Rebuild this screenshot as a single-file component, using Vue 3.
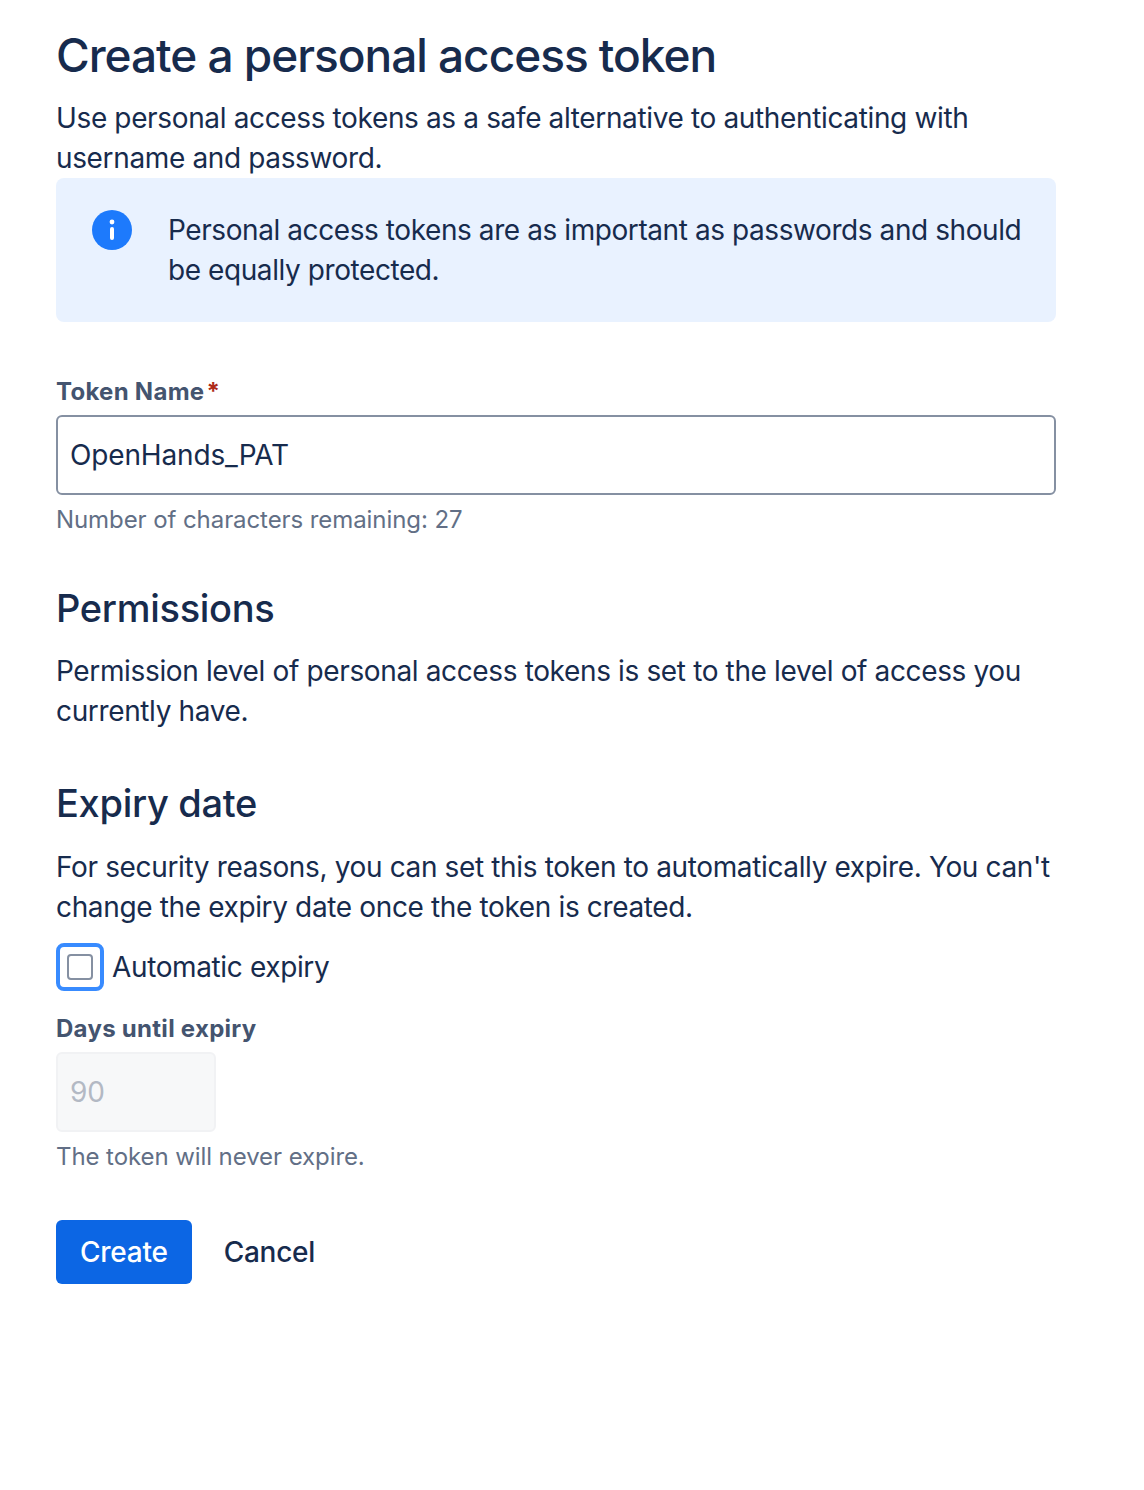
<template>
  <main class="page">
    <h1 class="title">Create a personal access token</h1>
    <p class="text">Use personal access tokens as a safe alternative to authenticating with username and password.</p>

    <div class="notice">
      <svg class="notice-icon" viewBox="0 0 40 40" aria-hidden="true">
        <circle cx="20" cy="20" r="20" fill="#1d7afc" />
        <circle cx="20" cy="12" r="2.4" fill="#fff" />
        <rect x="18" y="17" width="4" height="13" rx="2" fill="#fff" />
      </svg>
      <p class="text notice-text">Personal access tokens are as important as passwords and should be equally protected.</p>
    </div>

    <label class="label name-label">Token Name<span class="required">*</span></label>
    <input class="field" type="text" v-model="tokenName" />
    <div class="hint">Number of characters remaining: {{ 40 - tokenName.length }}</div>

    <h2 class="heading permissions">Permissions</h2>
    <p class="text">Permission level of personal access tokens is set to the level of access you currently have.</p>

    <h2 class="heading expiry">Expiry date</h2>
    <p class="text">For security reasons, you can set this token to automatically expire. You can't change the expiry date once the token is created.</p>

    <label class="check-row">
      <span class="check-focus"><span class="check-box"></span></span>
      <span class="check-label">Automatic expiry</span>
    </label>

    <label class="label days-label">Days until expiry</label>
    <input class="field field-days" type="text" value="90" disabled />
    <div class="hint">The token will never expire.</div>

    <div class="actions">
      <button class="btn btn-primary" type="button">Create</button>
      <button class="btn btn-link" type="button">Cancel</button>
    </div>
  </main>
</template>

<script setup>
import { ref } from 'vue';

const tokenName = ref('OpenHands_PAT');
</script>

<style scoped>
.page {
  box-sizing: border-box;
  width: 1144px;
  height: 1490px;
  padding: 25px 88px 0 56px;
  font-family: Inter, "Liberation Sans", sans-serif;
  font-size: 28px;
  line-height: 40px;
  color: #172b4d;
  background: #fff;
}

.title {
  margin: 0 0 13px;
  font-size: 46px;
  font-weight: 500;
  line-height: 60px;
  letter-spacing: -1.03px;
}

.text {
  margin: 0;
  letter-spacing: -0.36px;
}

.notice {
  display: flex;
  gap: 36px;
  height: 144px;
  box-sizing: border-box;
  padding: 32px 32px 0 36px;
  border-radius: 8px;
  background: #e9f2ff;
}

.notice-text {
  letter-spacing: -0.42px;
}

.notice-icon {
  flex: none;
  width: 40px;
  height: 40px;
}

.label {
  display: block;
  font-size: 24px;
  font-weight: 700;
  line-height: 32px;
  letter-spacing: 0.28px;
  color: #44546f;
}

.name-label {
  margin-top: 54px;
  margin-bottom: 7px;
}

.required {
  margin-left: 2px;
  color: #ae2a19;
}

.field {
  display: block;
  box-sizing: border-box;
  width: 100%;
  height: 80px;
  padding: 0 12px;
  border: 2px solid #8590a2;
  border-radius: 6px;
  outline: none;
  font: inherit;
  letter-spacing: -0.15px;
  color: #172b4d;
  background: #fff;
}

.field-days {
  width: 160px;
  border-color: #f1f2f4;
  color: #b3b9c4;
  background: #f7f8f9;
}

.hint {
  margin-top: 5px;
  font-size: 24px;
  line-height: 40px;
  letter-spacing: -0.08px;
  color: #626f86;
}

.heading {
  margin: 0 0 16px;
  font-size: 38px;
  font-weight: 500;
  line-height: 56px;
  letter-spacing: -0.3px;
}

.permissions {
  margin-top: 40px;
  margin-bottom: 15px;
}

.expiry {
  margin-top: 44px;
}

.check-row {
  display: flex;
  align-items: center;
  gap: 8px;
  margin-top: 16px;
  letter-spacing: -0.37px;
}

.check-focus {
  display: flex;
  align-items: center;
  justify-content: center;
  box-sizing: border-box;
  width: 48px;
  height: 48px;
  border: 4px solid #388bff;
  border-radius: 8px;
}

.check-box {
  box-sizing: border-box;
  width: 26px;
  height: 26px;
  border: 2px solid #8590a2;
  border-radius: 4px;
}

.days-label {
  margin-top: 22px;
  margin-bottom: 7px;
}

.actions {
  display: flex;
  gap: 8px;
  margin-top: 43px;
}

.btn {
  height: 64px;
  padding: 0 24px;
  border: none;
  border-radius: 6px;
  font: inherit;
  font-weight: 500;
  letter-spacing: -0.25px;
  background: none;
}

.btn-primary {
  color: #fff;
  background: #0c66e4;
}

.btn-link {
  color: #172b4d;
}
</style>

<style>
body {
  background: #fff;
}
</style>
